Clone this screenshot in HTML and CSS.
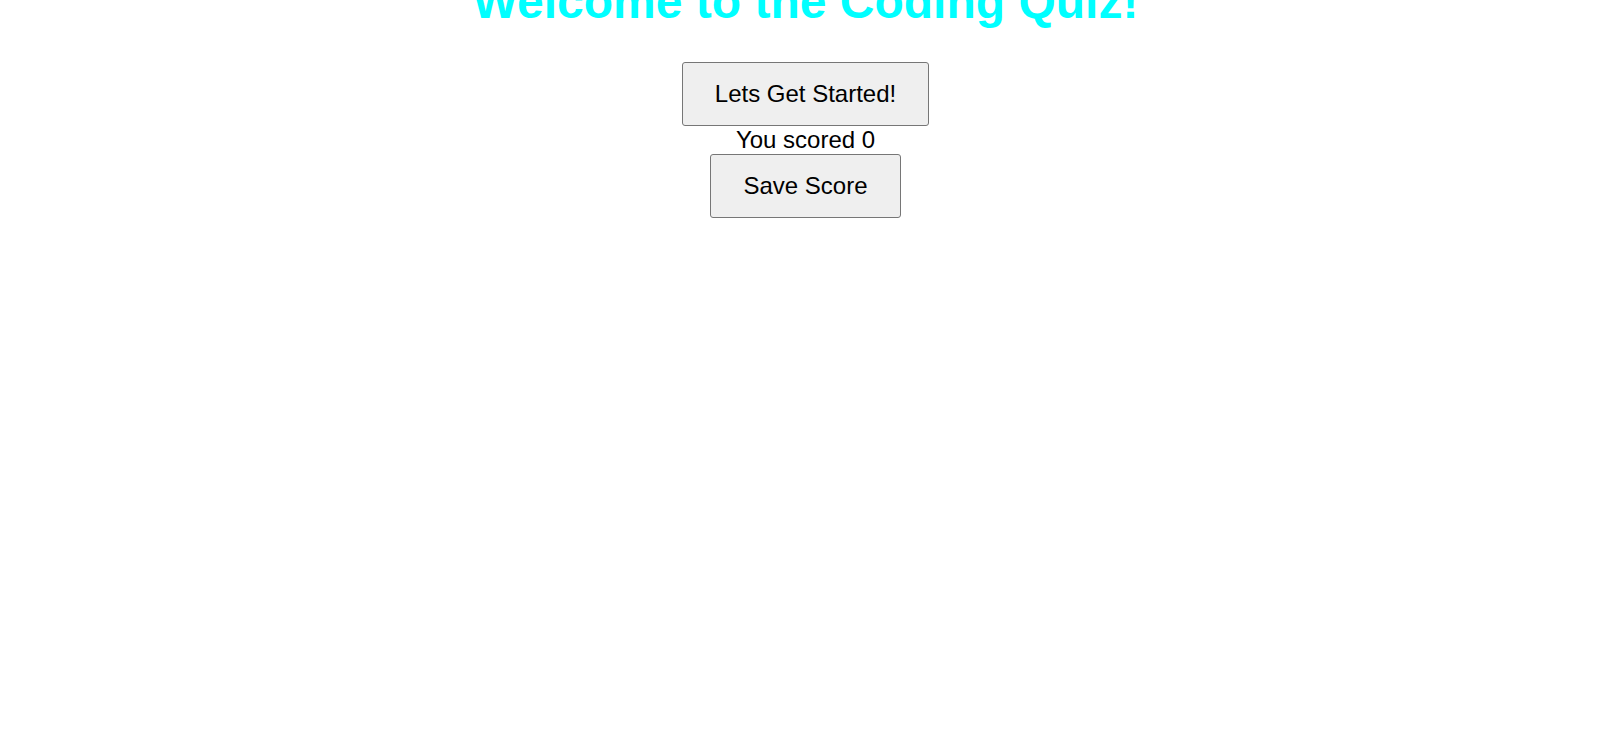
FILE: index.html
```html
<!DOCTYPE html>
<html lang="en">
<head>
<meta charset="utf-8">
<title>Coding Quiz</title>
<link rel="stylesheet" href="styles.css">
</head>
<body>
<main class="quiz">
  <h1 class="title">Welcome to the Coding Quiz!</h1>
  <button class="btn" type="button">Lets Get Started!</button>
  <p class="score">You scored 0</p>
  <button class="btn" type="button">Save Score</button>
</main>
</body>
</html>
```
FILE: styles.css
```css
html, body {
  margin: 0;
  padding: 0;
  background: #ffffff;
}

body {
  font-family: "Liberation Sans", Arial, sans-serif;
  color: #000000;
  overflow: hidden;
}

.quiz {
  display: flex;
  flex-direction: column;
  align-items: center;
  padding-left: 11px;
  text-align: center;
}

.title {
  margin: -26px 0 33px;
  font-size: 48px;
  font-weight: bold;
  color: #00ffff;
  line-height: 55px;
}

.btn {
  font-family: "Liberation Sans", Arial, sans-serif;
  font-size: 24px;
  line-height: 28px;
  color: #000000;
  background: #efefef;
  border: 1px solid #767676;
  border-radius: 3px;
  padding: 17px 32px;
  margin: 0;
}

.score {
  margin: 0;
  font-size: 24px;
  line-height: 28px;
}
```
